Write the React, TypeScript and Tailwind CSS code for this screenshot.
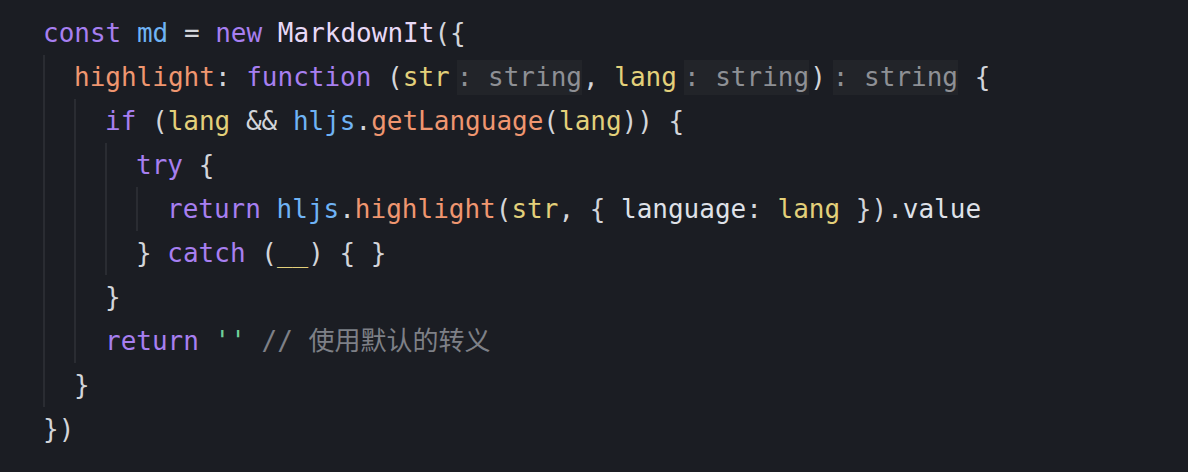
type Tok = [string, string];

const c = {
  kw: "text-[#a77ff0]",
  var: "text-[#6fb3f5]",
  cls: "text-[#e8d9f7]",
  fn: "text-[#ef9670]",
  param: "text-[#e3d07a]",
  punc: "text-[#d3d5da]",
  prop: "text-[#dfe1e8]",
  str: "text-[#6fd09a]",
  cmt: "text-[#7e8087]",
};

function Hint({ text }: { text: string }) {
  return (
    <span className="ml-[7px] mr-[1px] inline-flex h-[35px] items-center bg-[#222429] text-[#8e9095]">
      {text}
    </span>
  );
}

function Line({ toks }: { toks: (Tok | "hint")[] }) {
  return (
    <div className="flex h-[44px] items-center whitespace-pre">
      {toks.map((t, i) =>
        t === "hint" ? (
          <Hint key={i} text=": string" />
        ) : (
          <span key={i} className={t[0]}>
            {t[1]}
          </span>
        )
      )}
    </div>
  );
}

function Guide({ children }: { children: React.ReactNode }) {
  return (
    <div className="border-l-2 border-[#2a2c32] pl-[29px]">{children}</div>
  );
}

export default function App() {
  return (
    <div className="h-[472px] w-[1188px] overflow-hidden bg-[#1b1d23] pl-[43px] pt-[11px] font-['DejaVu_Sans_Mono','Noto_Sans_CJK_SC',monospace] text-[26px]">
      <Line
        toks={[
          [c.kw, "const "],
          [c.var, "md"],
          [c.punc, " = "],
          [c.kw, "new "],
          [c.cls, "MarkdownIt"],
          [c.punc, "({"],
        ]}
      />
      <Guide>
        <Line
          toks={[
            [c.fn, "highlight"],
            [c.punc, ": "],
            [c.kw, "function "],
            [c.punc, "("],
            [c.param, "str"],
            "hint",
            [c.punc, ", "],
            [c.param, "lang"],
            "hint",
            [c.punc, ")"],
            "hint",
            [c.punc, " {"],
          ]}
        />
        <Guide>
          <Line
            toks={[
              [c.kw, "if "],
              [c.punc, "("],
              [c.param, "lang"],
              [c.punc, " && "],
              [c.var, "hljs"],
              [c.punc, "."],
              [c.fn, "getLanguage"],
              [c.punc, "("],
              [c.param, "lang"],
              [c.punc, ")) {"],
            ]}
          />
          <Guide>
            <Line toks={[[c.kw, "try "], [c.punc, "{"]]} />
            <Guide>
              <Line
                toks={[
                  [c.kw, "return "],
                  [c.var, "hljs"],
                  [c.punc, "."],
                  [c.fn, "highlight"],
                  [c.punc, "("],
                  [c.param, "str"],
                  [c.punc, ", { "],
                  [c.prop, "language"],
                  [c.punc, ": "],
                  [c.param, "lang"],
                  [c.punc, " })."],
                  [c.prop, "value"],
                ]}
              />
            </Guide>
            <Line
              toks={[
                [c.punc, "} "],
                [c.kw, "catch "],
                [c.punc, "("],
                [c.param, "__"],
                [c.punc, ") { }"],
              ]}
            />
          </Guide>
          <Line toks={[[c.punc, "}"]]} />
          <Line
            toks={[
              [c.kw, "return "],
              [c.str, "''"],
              [c.cmt, " // 使用默认的转义"],
            ]}
          />
        </Guide>
        <Line toks={[[c.punc, "}"]]} />
      </Guide>
      <Line toks={[[c.punc, "})"]]} />
    </div>
  );
}
